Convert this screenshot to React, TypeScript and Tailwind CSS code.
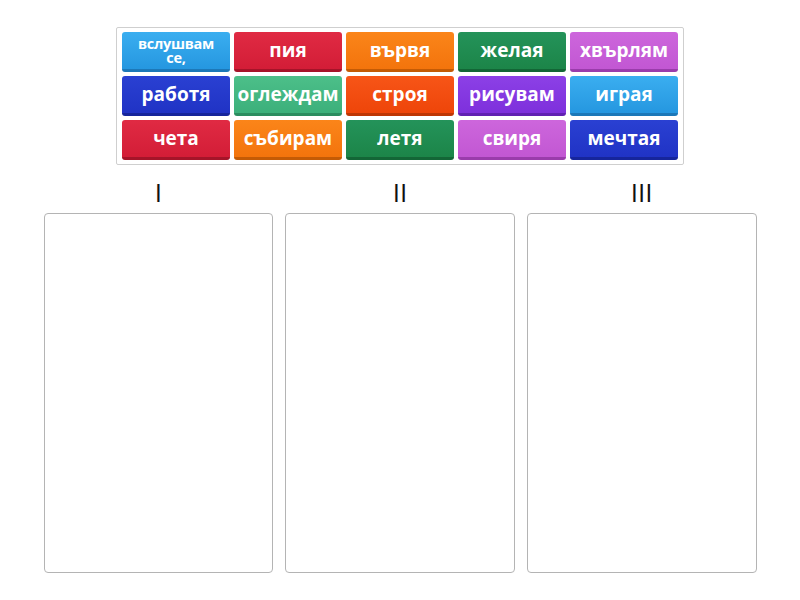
import React from "react";

// colour sets for the tiles
const BLUE_LIGHT = "from-[#3aaef0] to-[#2597e0] border-[#1c78b8]";
const RED = "from-[#e02a43] to-[#d31d37] border-[#a51429]";
const ORANGE = "from-[#fb8519] to-[#f3740c] border-[#c45b05]";
const GREEN = "from-[#24935a] to-[#1c8548] border-[#136636]";
const PINK = "from-[#cd66dc] to-[#c257d3] border-[#9a3cab]";
const BLUE = "from-[#2a40d2] to-[#2033c5] border-[#16259b]";
const MINT = "from-[#4cbf89] to-[#3cb07b] border-[#2b8d5f]";
const ORANGE_RED = "from-[#f75517] to-[#ee4509] border-[#be3604]";
const PURPLE = "from-[#8c40e6] to-[#7e30dc] border-[#6121b2]";

interface Tile {
  text: string;
  color: string;
  small?: boolean;
}

const tiles: Tile[] = [
  { text: "вслушвам се,", color: BLUE_LIGHT, small: true },
  { text: "пия", color: RED },
  { text: "вървя", color: ORANGE },
  { text: "желая", color: GREEN },
  { text: "хвърлям", color: PINK },
  { text: "работя", color: BLUE },
  { text: "оглеждам", color: MINT },
  { text: "строя", color: ORANGE_RED },
  { text: "рисувам", color: PURPLE },
  { text: "играя", color: BLUE_LIGHT },
  { text: "чета", color: RED },
  { text: "събирам", color: ORANGE },
  { text: "летя", color: GREEN },
  { text: "свиря", color: PINK },
  { text: "мечтая", color: BLUE },
];

const groups = ["I", "II", "III"];

export default function App() {
  return (
    <div
      className="w-[800px] h-[600px] bg-white flex flex-col items-center"
      style={{ fontFamily: '"Open Sans", "Noto Sans", sans-serif' }}
    >
      <div className="mt-[27px] w-[568px] border border-[#cfcfcf] rounded-[2px] px-[5px] py-[4px] grid grid-cols-5 gap-[4px]">
        {tiles.map((tile, i) => (
          <div
            key={i}
            className={
              "h-[40px] rounded-[3px] border-b-[3px] bg-linear-to-b flex items-center justify-center text-white font-bold text-center overflow-hidden whitespace-nowrap " +
              tile.color
            }
          >
            {tile.small ? (
              <span className="text-[14.5px] leading-[14px] whitespace-normal w-[80px] tracking-[-0.3px]">
                {tile.text}
              </span>
            ) : (
              <span className="text-[19px] leading-none">{tile.text}</span>
            )}
          </div>
        ))}
      </div>

      <div className="mt-[9px] w-[713px] grid grid-cols-3 gap-[12px]">
        {groups.map((g) => (
          <div key={g} className="flex flex-col">
            <div className="h-[36px] leading-[36px] text-[26px] font-medium text-center text-[#111111]">
              {g}
            </div>
            <div className="mt-[3px] h-[360px] border border-[#b4b4b4] rounded-[4px] bg-white"></div>
          </div>
        ))}
      </div>
    </div>
  );
}
